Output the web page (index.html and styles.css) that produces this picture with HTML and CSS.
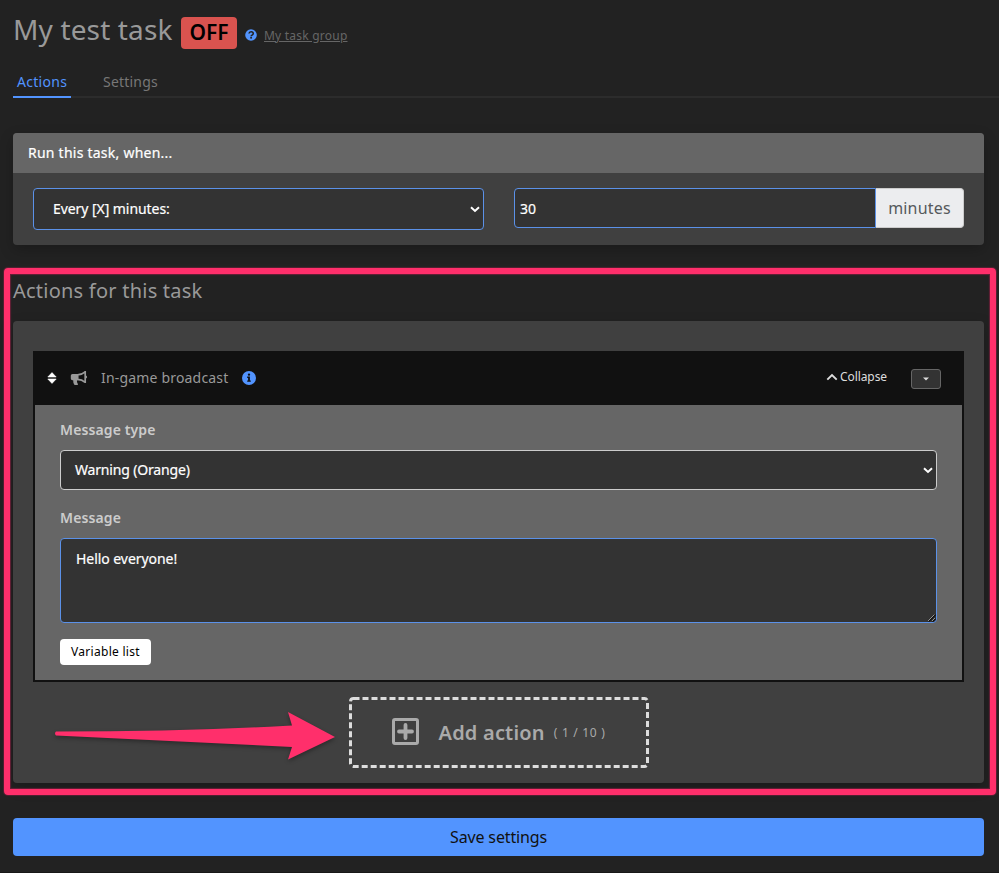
FILE: index.html
```html
<!DOCTYPE html>
<html lang="en">
<head>
<meta charset="utf-8">
<title>My test task</title>
<link rel="stylesheet" href="styles.css">
</head>
<body>
<main class="page">
  <header class="heading">
    <h1 class="title">My test task</h1>
    <span class="status">OFF</span>
    <svg class="help" viewBox="0 0 512 512"><circle cx="256" cy="256" r="248" fill="#5294ff"/><path d="M170 192c6-52 42-78 90-78 56 0 92 30 92 76 0 70-90 64-90 118" fill="none" stroke="#222" stroke-width="66"/><circle cx="260" cy="376" r="42" fill="#222"/></svg>
    <a class="group">My task group</a>
  </header>
  <nav class="tabs"><a class="tab active">Actions</a><a class="tab">Settings</a></nav>

  <section class="card trigger">
    <div class="card-head">Run this task, when...</div>
    <div class="trigger-body">
      <div class="select trigger-select"><span>Every [X] minutes:</span><svg class="chevron" viewBox="0 0 10 7"><path d="M1 1.300 5 5 9 1.300"/></svg></div>
      <div class="input-group"><div class="number">30</div><div class="unit">minutes</div></div>
    </div>
  </section>

  <section class="actions">
    <h2 class="subtitle">Actions for this task</h2>
    <div class="card actions-card">
      <article class="action">
        <div class="action-head">
          <svg class="sort" viewBox="0 0 10 12"><path d="M5 .6 9.200 5H.8zM5 11.400.8 7h8.400z" fill="#fff" stroke="#fff" stroke-width=".6" stroke-linejoin="round"/></svg>
          <svg class="horn" viewBox="0 0 18 16"><path d="M15.200 1.100v12M15.200 1.900C12.800 4 10.500 4.800 7.500 4.800v4.600c3 0 5.300.8 7.700 2.900" fill="none" stroke="#999" stroke-width="1.700" stroke-linejoin="round"/><path d="M8.300 3.900H2.500A1.700 1.700 0 0 0 .8 5.600v3a1.700 1.700 0 0 0 1.700 1.700h.7c-.1 1.600.2 3 .9 4.300.2.300.5.500.9.500h2.100c.7 0 1.100-.8.7-1.400-.7-1-.9-2.100-.8-3.400h1.300z" fill="#999"/><path d="M15.800 5.600q1.300.3 1.300 1.500t-1.300 1.500z" fill="#999"/></svg>
          <span class="action-name">In-game broadcast</span>
          <svg class="info" viewBox="0 0 14 14"><circle cx="7" cy="7" r="7" fill="#5294ff"/><path d="M7 2.400a1.200 1.200 0 1 1 0 2.400 1.200 1.200 0 0 1 0-2.400zM5.200 5.600h2.700v3.800h.9v1.400H5.200V9.400h.9V7h-.9z" fill="#111"/></svg>
          <span class="collapse"><svg class="up" viewBox="0 0 12 8"><path d="M1.300 6.700 6 2l4.700 4.700" fill="none" stroke="#ddd" stroke-width="1.900"/></svg>Collapse</span>
          <span class="menu"><svg class="caret" viewBox="0 0 6 4"><path d="M0 .5h6L3 3.500z" fill="#ddd"/></svg></span>
        </div>
        <div class="action-body">
          <div class="label">Message type</div>
          <div class="select type-select"><span>Warning (Orange)</span><svg class="chevron" viewBox="0 0 10 7"><path d="M1 1.300 5 5 9 1.300"/></svg></div>
          <div class="label second">Message</div>
          <div class="textarea">Hello everyone!<svg class="grip" viewBox="0 0 8 8"><path d="M.5 7.500l7-7M4.500 7.500l3-3" stroke="#111" stroke-width="1.600"/><path d="M0 7l6.500-6.500M4 7l3-3" stroke="#ccc" stroke-width=".7"/></svg></div>
          <span class="variables">Variable list</span>
        </div>
      </article>
      <div class="add">
        <svg class="dashes" viewBox="0 0 300 71"><rect x="1.500" y="1.500" width="297" height="68" rx="3"/></svg>
        <svg class="plus" viewBox="0 0 27 27"><rect x="1.500" y="1.500" width="24" height="24" rx="1.500"/><path d="M13.500 7v13M7 13.500h13" stroke-width="3.800" stroke-linecap="round"/></svg>
        <span class="add-text">Add action</span><span class="count">( 1 / 10 )</span>
      </div>
      <svg class="arrow" viewBox="0 0 290 60"><path d="M4 21.500Q130 21.500 240 15.500L236 2 283 27 236 49.500 240 37 4 25.500Q2 23.500 4 21.500Z" fill="#ff2f6b"/></svg>
    </div>
    <div class="frame"></div>
  </section>
  <div class="save">Save settings</div>
</main>
</body>
</html>
```
FILE: styles.css
```css
* { box-sizing: border-box; }
body { margin: 0; background: #222; color: #fff; font: 14px/20px "Noto Sans", sans-serif; height: 873px; overflow: hidden; }
svg { display: block; flex: none; }
.page { padding: 13px 15px 0 13px; height: 873px; border-bottom: 1px solid #181818; }
.heading { display: flex; height: 36px; }
.title { margin: -4px 0 0; width: 168px; font-size: 28px; line-height: 40px; font-weight: 400; color: #999; letter-spacing: .15px; white-space: nowrap; }
.status { width: 56px; height: 32px; margin-top: 4px; border-radius: 4px; background: #d9534f; color: #000; font-size: 21px; line-height: 31px; font-weight: 600; text-align: center; }
.help { width: 12px; height: 12px; margin: 16px 7px 0 8px; }
.group { color: #666; font-size: 12px; line-height: 18px; margin-top: 14px; letter-spacing: .22px; text-decoration: underline; }
.tabs { display: flex; gap: 28px; height: 49px; margin-right: -15px; border-bottom: 2px solid #2c2c2c; color: #777; }
.tab { padding: 23px 4px 0; height: 49px; letter-spacing: .2px; }
.active { width: 58px; color: #5294ff; border-bottom: 2px solid #5294ff; letter-spacing: .3px; }
.card { background: #404040; border-radius: 4px; box-shadow: 0 5px 14px rgba(0,0,0,.22); }
.trigger { margin-top: 35px; height: 112px; }
.card-head { height: 40px; padding: 10px 15px; background: #666; border-radius: 4px 4px 0 0; letter-spacing: .24px; -webkit-text-stroke: .2px; }
.trigger-body { display: grid; grid-template-columns: 451px 450px; gap: 30px; padding: 15px 20px; align-items: start; }
.select { display: flex; align-items: center; justify-content: space-between; background: #333; border: 1px solid #ccc; border-radius: 4px; -webkit-text-stroke: .2px; }
.trigger-select { height: 42px; border-color: #5b91e8; padding: 0 3px 0 19px; letter-spacing: -.06px; }
.type-select { height: 40px; padding: 0 3px 0 14px; letter-spacing: -.17px; }
.chevron { width: 10px; height: 7px; fill: none; stroke: #fff; stroke-width: 2; }
.input-group { display: flex; height: 40px; }
.number { flex: 1; border: 1px solid #5b91e8; border-radius: 4px 0 0 4px; background: #333; padding: 10px 5px; -webkit-text-stroke: .2px; }
.unit { width: 88px; background: #ecedef; border: 1px solid #ccc; border-left: 0; border-radius: 0 4px 4px 0; color: #55595c; font-size: 16px; line-height: 38px; text-align: center; letter-spacing: .2px; }
.actions { position: relative; padding-top: 35px; height: 538px; }
.subtitle { margin: 0; height: 41px; color: #999; font-size: 20px; line-height: 22px; font-weight: 400; letter-spacing: .23px; }
.actions-card { position: relative; height: 462px; padding: 30px 20px 0; }
.action { height: 331px; border: 2px solid #111; background: #666; }
.action-head { height: 52px; background: #111; display: flex; align-items: center; padding: 0 21px 2px 12px; }
.sort { width: 10px; height: 12px; margin-right: 13px; }
.horn { width: 18px; height: 16px; margin-right: 13px; }
.action-name { color: #999; letter-spacing: .18px; margin-right: 14px; }
.info { width: 14px; height: 14px; }
.collapse { display: flex; align-items: center; gap: 2px; margin-left: auto; margin-top: -3px; font-size: 12px; letter-spacing: -.08px; color: #ddd; }
.up { width: 12px; height: 8px; }
.menu { display: flex; align-items: center; justify-content: center; margin-left: 24px; width: 30px; height: 20px; margin-top: 2px; border: 1px solid #666; border-radius: 3px; background: #333; }
.caret { width: 6px; height: 4px; }
.action-body { padding: 15px 25px; }
.label { height: 30px; color: #ccc; font-weight: 600; letter-spacing: .12px; }
.second { margin-top: 18px; }
.textarea { position: relative; height: 85px; background: #333; border: 1px solid #5b91e8; border-radius: 4px; padding: 10px 15px; letter-spacing: -.05px; -webkit-text-stroke: .2px; }
.grip { position: absolute; right: 0; bottom: 0; width: 8px; height: 8px; }
.variables { display: block; margin-top: 16px; width: 91px; height: 26px; border-radius: 4px; background: #fff; color: #000; text-align: center; font-size: 12px; line-height: 25px; letter-spacing: .28px; }
.add { position: relative; display: flex; align-items: center; width: 300px; height: 71px; margin: 15px auto 0; padding-left: 43px; }
.dashes { position: absolute; inset: 0; width: 300px; height: 71px; fill: none; stroke: #ddd; stroke-width: 3; stroke-dasharray: 6 3; }
.plus { width: 27px; height: 27px; margin: -2px 20px 0 0; fill: none; stroke: #aaa; stroke-width: 3; }
.add-text { color: #aaa; font-size: 20px; font-weight: 600; letter-spacing: .2px; }
.count { color: #aaa; font-size: 12px; margin-left: 9px; letter-spacing: .7px; }
.arrow { position: absolute; left: 39px; top: 389px; width: 290px; height: 60px; filter: drop-shadow(0 2px 2px rgba(0,0,0,.35)); }
.frame { position: absolute; left: -9px; top: 23px; width: 992px; height: 527px; border: 6px solid #ff2f6b; border-radius: 4px; box-shadow: 0 0 1px 1px rgba(150,30,70,.45), inset 0 0 1px 1px rgba(150,30,70,.6); }
.save { margin-top: 35px; height: 38px; border-radius: 4px; background: #5294ff; color: #111; text-align: center; font-size: 16px; line-height: 38px; letter-spacing: -.14px; }
```
